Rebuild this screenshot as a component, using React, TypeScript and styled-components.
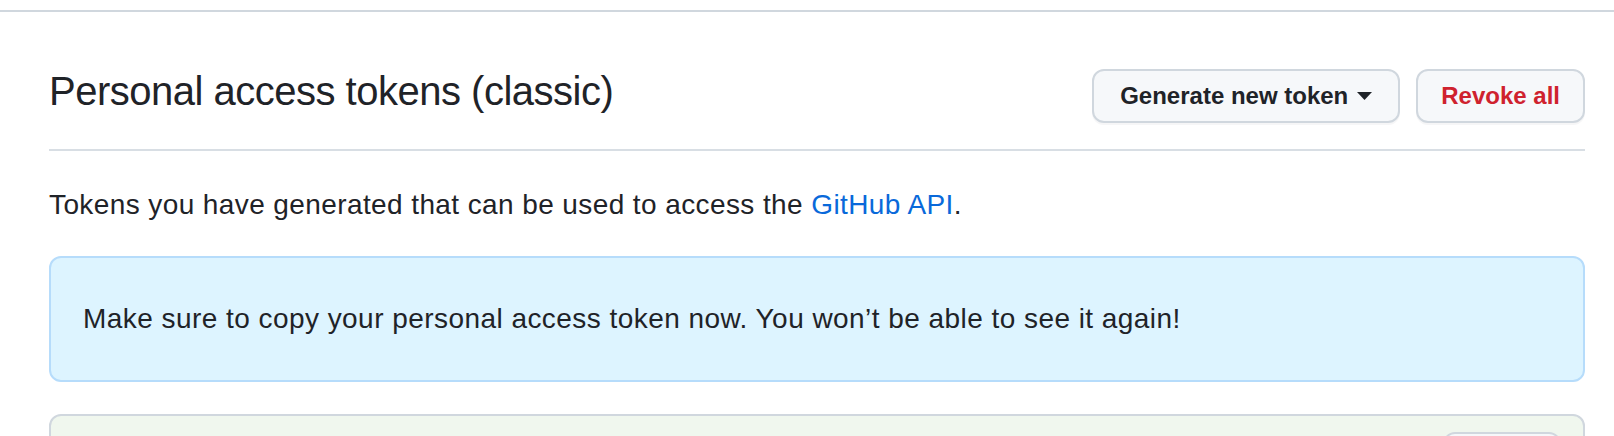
import React from 'react';
import styled, { createGlobalStyle } from 'styled-components';

const GlobalStyle = createGlobalStyle`
  html, body {
    margin: 0;
    padding: 0;
    background: #ffffff;
    overflow: hidden;
  }
  body {
    font-family: 'Liberation Sans', Arial, sans-serif;
    color: #1f2328;
  }
  * {
    box-sizing: border-box;
  }
`;

const S = {
  Page: styled.div`
    width: 1614px;
    height: 436px;
    overflow: hidden;
  `,
  TopRule: styled.div`
    margin-top: 10px;
    height: 2px;
    background: #d0d7de;
  `,
  Content: styled.main`
    padding: 0 29px 0 49px;
  `,
  Subhead: styled.div`
    display: flex;
    justify-content: space-between;
    align-items: flex-start;
    padding: 54px 0 26px;
    border-bottom: 2px solid #d8dee4;
  `,
  Heading: styled.h2`
    margin: 0;
    font-size: 40px;
    line-height: 50px;
    font-weight: 400;
    letter-spacing: -0.5px;
  `,
  Actions: styled.div`
    display: flex;
    gap: 16px;
    margin-top: 3px;
  `,
  Button: styled.button<{ $danger?: boolean }>`
    display: inline-flex;
    align-items: center;
    height: 54px;
    padding: 0 ${(p) => (p.$danger ? '23px' : '26px')};
    font-family: 'Liberation Sans', Arial, sans-serif;
    font-size: 24px;
    font-weight: 700;
    color: ${(p) => (p.$danger ? '#cf222e' : '#1f2328')};
    background: #f6f8fa;
    border: 2px solid #d0d7de;
    border-radius: 12px;
    box-shadow: 0 2px 0 rgba(31, 35, 40, 0.04);
    cursor: pointer;
  `,
  Caret: styled.svg`
    margin-left: 9px;
    flex-shrink: 0;
  `,
  Lead: styled.p`
    margin: 33px 0 30px;
    font-size: 28px;
    line-height: 42px;
    letter-spacing: 0.4px;
  `,
  Link: styled.a`
    color: #0969da;
    text-decoration: none;
  `,
  Flash: styled.div`
    padding: 40px 32px;
    font-size: 28px;
    line-height: 42px;
    letter-spacing: 0.45px;
    background: #ddf4ff;
    border: 2px solid #b6dcfb;
    border-radius: 12px;
  `,
  TokenBox: styled.div`
    display: flex;
    justify-content: flex-end;
    margin-top: 32px;
    padding: 16px 22px;
    height: 110px;
    background: #f0f7ee;
    border: 2px solid #d0d7de;
    border-radius: 12px;
  `,
  SmallButton: styled.button`
    width: 118px;
    height: 56px;
    background: #f6f8fa;
    border: 2px solid #d0d7de;
    border-radius: 12px;
  `,
};

const App = () => {
  return (
    <S.Page>
      <GlobalStyle />
      <S.TopRule />
      <S.Content>
        <S.Subhead>
          <S.Heading>Personal access tokens (classic)</S.Heading>
          <S.Actions>
            <S.Button>
              Generate new token
              <S.Caret width="15" height="8" viewBox="0 0 15 8">
                <polygon points="0,0 15,0 7.5,8" fill="#1f2328" />
              </S.Caret>
            </S.Button>
            <S.Button $danger>Revoke all</S.Button>
          </S.Actions>
        </S.Subhead>
        <S.Lead>
          Tokens you have generated that can be used to access the{' '}
          <S.Link href="#">GitHub API</S.Link>.
        </S.Lead>
        <S.Flash>
          Make sure to copy your personal access token now. You won’t be able to see it again!
        </S.Flash>
        <S.TokenBox>
          <S.SmallButton aria-label="Delete token" />
        </S.TokenBox>
      </S.Content>
    </S.Page>
  );
};

export default App;
